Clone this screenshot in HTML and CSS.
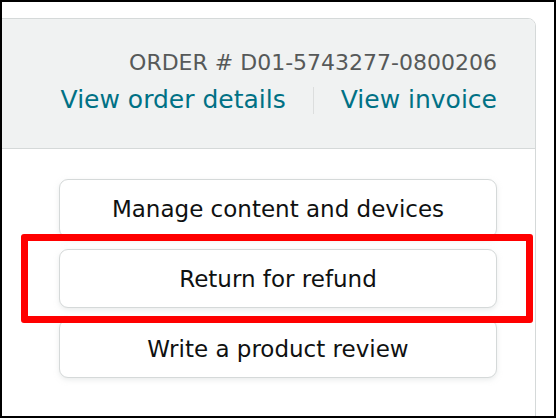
FILE: index.html
```html
<!DOCTYPE html>
<html lang="en">
<head>
<meta charset="utf-8">
<title>Order actions</title>
<link rel="stylesheet" href="styles.css">
</head>
<body>
<div class="frame">
  <div class="card">
    <div class="card-header">
      <div class="order-no">ORDER # D01-5743277-0800206</div>
      <div class="links">
        <a class="link" href="#">View order details</a>
        <span class="sep"></span>
        <a class="link" href="#">View invoice</a>
      </div>
    </div>
    <div class="card-body">
      <a class="btn" href="#">Manage content and devices</a>
      <a class="btn" href="#">Return for refund</a>
      <a class="btn" href="#">Write a product review</a>
    </div>
  </div>
  <div class="highlight"></div>
</div>
</body>
</html>
```

FILE: styles.css
```css
html, body {
  margin: 0;
  padding: 0;
  background: #ffffff;
}

.frame {
  position: relative;
  box-sizing: border-box;
  width: 556px;
  height: 418px;
  border: 2px solid #000000;
  padding: 16px 18px 0 0;
  overflow: hidden;
  font-family: "DejaVu Sans", "Noto Sans", sans-serif;
}

.card {
  margin-left: -10px;
  border: 1px solid #d5d9d9;
  border-radius: 0 8px 0 0;
  height: 440px;
  background: #ffffff;
}

.card-header {
  background: #f0f2f2;
  border-radius: 0 7px 0 0;
  border-bottom: 1px solid #d5d9d9;
  padding: 31px 38px 31px 0;
  display: flex;
  flex-direction: column;
  align-items: flex-end;
}

.order-no {
  font-size: 22px;
  line-height: 26px;
  color: #565959;
}

.links {
  margin-top: 7px;
  display: flex;
  align-items: center;
  height: 34px;
}

.link {
  font-size: 25px;
  line-height: 34px;
  color: #007185;
  text-decoration: none;
}

.sep {
  width: 1px;
  height: 27px;
  background: #dcdede;
  margin: 0 27px;
}

.card-body {
  padding: 30px 38px 0 0;
  display: flex;
  flex-direction: column;
  align-items: flex-end;
  gap: 11px;
}

.btn {
  box-sizing: border-box;
  width: 438px;
  height: 59px;
  border: 1px solid #d5d9d9;
  border-radius: 9px;
  box-shadow: 0 2px 5px 0 rgba(213, 217, 217, 0.5);
  display: flex;
  align-items: center;
  justify-content: center;
  font-size: 23px;
  color: #0f1111;
  text-decoration: none;
  background: #ffffff;
}

.highlight {
  position: absolute;
  left: 19px;
  top: 232px;
  width: 512px;
  height: 89px;
  box-sizing: border-box;
  border: 7px solid #ff0000;
  border-radius: 3px;
}
```
